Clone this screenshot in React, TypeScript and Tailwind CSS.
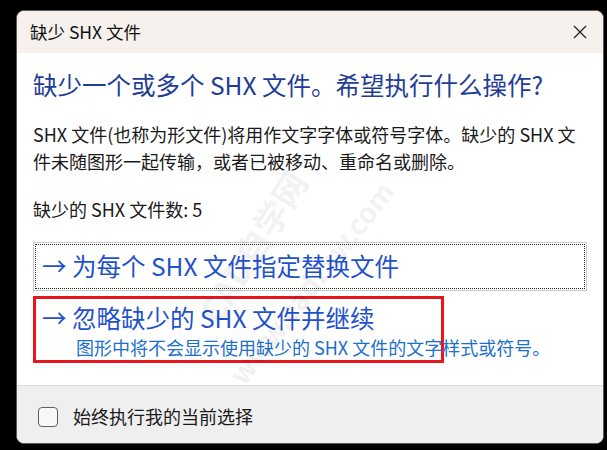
import React from "react";

const font = { fontFamily: '"Noto Sans CJK SC", "Noto Sans", sans-serif' };

export default function App() {
  return (
    <div className="w-[607px] h-[450px] bg-black pt-[10px] pl-[16px] pr-[3px] pb-[6px]" style={font}>
      <div className="relative flex h-[434px] w-[588px] flex-col overflow-hidden rounded-[8px] border border-[#5a5a5a] bg-white">
        {/* title bar */}
        <div className="flex h-[42px] shrink-0 items-center justify-between bg-[#f6f1ed] pl-[13px] pr-[15px]">
          <span className="text-[17.5px] text-[#111]">缺少 SHX 文件</span>
          <svg width="16" height="16" viewBox="0 0 16 16" className="text-[#222]">
            <path d="M2 2 L14 14 M14 2 L2 14" stroke="currentColor" strokeWidth="1.3" fill="none" />
          </svg>
        </div>

        {/* body */}
        <div className="flex flex-1 flex-col px-[16px] pt-[16px]">
          <h1 className="text-[24.5px] leading-[32px] text-[#1f3d96] whitespace-nowrap">缺少一个或多个 SHX 文件。希望执行什么操作?</h1>
          <p className="mt-[20px] text-[18px] leading-[27px] text-[#1a1a1a]">
            SHX 文件(也称为形文件)将用作文字字体或符号字体。缺少的 SHX 文件未随图形一起传输，或者已被移动、重命名或删除。
          </p>
          <p className="mt-[21px] text-[18px] leading-[27px] text-[#1a1a1a]">缺少的 SHX 文件数: 5</p>

          <div className="mt-[19px] border border-[#c8c8c8] p-px">
            <div className="flex h-[45px] items-center border border-dotted border-[#222] pl-[6px] text-[24.5px] text-[#1f52cc] whitespace-nowrap">
              → 为每个 SHX 文件指定替换文件
            </div>
          </div>

          <div className="mt-[5px] flex w-[411px] flex-col border-[3px] border-[#e3171c] pl-[6px] pt-[3px]">
            <span className="text-[24.5px] leading-[32px] text-[#1f52cc] whitespace-nowrap">→ 忽略缺少的 SHX 文件并继续</span>
            <span className="pl-[34px] text-[18px] leading-[26px] text-[#1c6fcc] whitespace-nowrap">
              图形中将不会显示使用缺少的 SHX 文件的文字样式或符号。
            </span>
          </div>
        </div>

        {/* footer */}
        <div className="flex h-[58px] shrink-0 items-center gap-[15px] border-t border-[#dcdcdc] bg-[#efefef] pl-[21px] pt-[4px]">
          <div className="h-[20px] w-[20px] rounded-[4px] border border-[#5f5f5f] bg-[#f7f7f7]" />
          <span className="text-[18px] text-[#1a1a1a]">始终执行我的当前选择</span>
        </div>

        {/* watermark */}
        <div className="pointer-events-none absolute left-[150px] top-[210px] -rotate-[58deg] text-[34px] font-bold text-[#000] opacity-[0.05] whitespace-nowrap">
          CAD自学网
        </div>
        <div className="pointer-events-none absolute left-[170px] top-[250px] -rotate-[52deg] text-[28px] font-bold text-[#000] opacity-[0.05] whitespace-nowrap">
          www.cadzxw.com
        </div>
      </div>
    </div>
  );
}
